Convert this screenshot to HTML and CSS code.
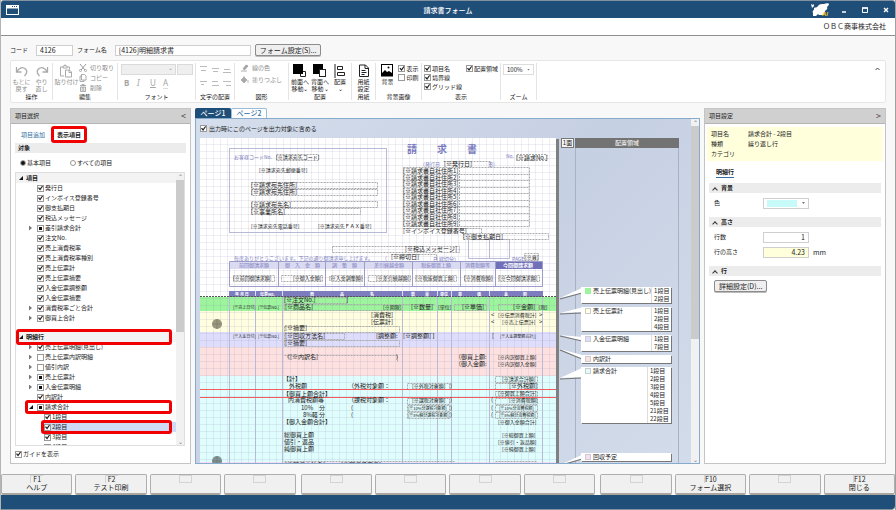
FILE: index.html
```html
<!DOCTYPE html>
<html lang="ja">
<head>
<meta charset="utf-8">
<title>請求書フォーム</title>
<link rel="stylesheet" href="styles.css">
</head>
<body>
<div class="app">
  <header class="titlebar">
    <svg class="app-icon" width="13" height="10" viewBox="0 0 13 10"><rect x="0.5" y="0.5" width="12" height="9" fill="#1f4e79" stroke="#fff"/><path d="M0 2H13" stroke="#fff" stroke-width="3"/><path d="M6 1.5h1M8 1.5h1M10 1.5h1" stroke="#1f4e79"/></svg>
    <h1>請求書フォーム</h1>
    <div class="window-tools">
      <svg width="20" height="14" viewBox="0 0 20 14"><path d="M0 1l2 1 1-1v2l-1 1-1 1z M3 5c1-1 3 0 4-2 1-2 4-2 6-2 2-1 5-1 5 0 0 1-1 2-2 3 1 2-1 3-2 4l-1 4H8l-1-1-2 2H2V10C1 9 2 7 3 7z" fill="#fff"/><text x="11" y="13" class="ai">AI</text></svg>
      <button type="button" aria-label="最小化"><svg width="6" height="8" viewBox="0 0 6 8"><path d="M1 6h4" stroke="#fff" stroke-width="1.5"/></svg></button>
      <button type="button" aria-label="最大化"><svg width="6" height="8" viewBox="0 0 6 8"><path d="M.5 2v4.500h5V2z" fill="none" stroke="#fff"/><path d="M0 2h6" stroke="#fff" stroke-width="1.500"/></svg></button>
      <button type="button" aria-label="閉じる"><svg width="6" height="8" viewBox="0 0 6 8"><path d="M1 2l4 4M5 2l-4 4" stroke="#fff" stroke-width="1.400"/></svg></button>
    </div>
  </header>
  <div class="company">ＯＢＣ商事株式会社</div>

  <form class="form-row">
    <label for="code">コード</label><input id="code" class="box code" value="4126">
    <label for="fname">フォーム名</label><input id="fname" class="box fname" value="[4126]明細請求書">
    <button type="button" class="btn">フォーム設定(S)...</button>
  </form>

  <div class="ribbon">
    <section class="group g-op">
      <div class="tools">
        <button type="button" class="tool off"><svg width="14" height="12" viewBox="0 0 14 12"><path d="M1.500 2v5h5M2 6.500C4 2.500 8 1.500 10.500 4c2 2 1.500 4.500-1 7" fill="none" stroke="#aaa" stroke-width="1.300"/></svg>もとに<br>戻す</button>
        <button type="button" class="tool off"><svg width="14" height="12" viewBox="0 0 14 12"><path d="M12.500 2v5h-5M12 6.500C10 2.500 6 1.500 3.500 4c-2 2-1.500 4.500 1 7" fill="none" stroke="#aaa" stroke-width="1.300"/></svg>やり<br>直し</button>
      </div><h2>操作</h2>
    </section>
    <section class="group g-edit">
      <div class="tools">
        <button type="button" class="tool off"><svg width="12" height="13" viewBox="0 0 12 13"><path d="M4 11.500H.5v-9H3M7 2.500h2.500V5M3 3.500v-2h1.500V.5h1v1H7v2z M5.500 5.500h4l2 2v5h-6z M9 5.500V8h2.500" fill="none" stroke="#aaa"/></svg>貼り付け</button>
        <div class="stack off">
          <button type="button"><svg width="8" height="8" viewBox="0 0 8 8"><path d="M1 0l5 6M7 0L2 6" stroke="#999"/><circle cx="1.500" cy="6.500" r="1" fill="none" stroke="#999" stroke-width=".8"/><circle cx="6.500" cy="6.500" r="1" fill="none" stroke="#999" stroke-width=".8"/></svg>切り取り</button>
          <button type="button"><svg width="8" height="8" viewBox="0 0 8 8"><path d="M2.500 .5h3l1.500 1.500v4h-4.500zM2.500 2H1v5.500h4V6" fill="none" stroke="#999" stroke-width=".8"/></svg>コピー</button>
          <button type="button"><svg width="8" height="8" viewBox="0 0 8 8"><path d="M1 1.500h6M3 1.500v-1h2v1M1.500 3h5v4.500h-5zM3.200 3v4M4.800 3v4" fill="none" stroke="#999" stroke-width=".8"/></svg>削除</button>
        </div>
      </div><h2>編集</h2>
    </section>
    <section class="group g-font">
      <div class="tools wrap">
        <span class="gray-select wide">⌄</span><span class="gray-select"></span>
        <div class="letters"><b>B</b><i>I</i><u>U</u><span class="color-a">A</span></div>
      </div><h2>フォント</h2>
    </section>
    <section class="group g-align">
      <div class="tools"><svg width="32" height="24" viewBox="0 0 32 24"><g stroke="#bbb" stroke-width="1" fill="none"><path d="M1 2.500h7M2 6.500h5M13 4.500h7M14 7.500h5M25 5.500h6M24 8.500h8M1 17.500h7M2 20.500h3M13 17.500h6M13 21.500h7M24 17.500h8M27 21.500h5"/></g></svg></div>
      <h2>文字の配置</h2>
    </section>
    <section class="group g-shape">
      <div class="tools stack off two">
        <button type="button"><svg width="8" height="8" viewBox="0 0 8 8"><path d="M0 7h6M2 5l3-4 2 1-3 3.500z" stroke="#999" fill="#aaa" stroke-width=".8"/></svg>線の色</button>
        <button type="button"><svg width="8" height="8" viewBox="0 0 8 8"><path d="M0 4l3-3 3 3-3 3zM3 0v3M7 4v3" stroke="#aaa" fill="#aaa" stroke-width=".8"/></svg>塗りつぶし</button>
      </div><h2>図形</h2>
    </section>
    <section class="group g-arr">
      <div class="tools">
        <button type="button" class="tool"><svg width="14" height="14" viewBox="0 0 14 14"><path d="M9 7.500h3.500v5H7.500V10" fill="none" stroke="#222"/><rect x="0" y="0" width="10" height="10" fill="#000"/></svg>前面へ<br>移動⌄</button>
        <button type="button" class="tool"><svg width="14" height="14" viewBox="0 0 14 14"><rect x="0" y="0" width="10" height="10" fill="#000"/><rect x="6.500" y="5.500" width="6" height="7" fill="#fff" stroke="#222"/></svg>背面へ<br>移動⌄</button>
        <button type="button" class="tool"><svg width="12" height="14" viewBox="0 0 12 14"><path d="M1 0v14M3.500 2.500h5v3h-5zM3.500 8.500h7v3h-7z" fill="none" stroke="#222"/></svg>配置<br>⌄</button>
      </div><h2>配置</h2>
    </section>
    <section class="group g-paper">
      <div class="tools"><button type="button" class="tool"><svg width="10" height="14" viewBox="0 0 10 14"><path d="M.5 1h6l3 3v8.500h-9zM6 1v3.500h3.500M2.500 6.500h4M2.500 8.500h5M2.500 10.500h3" fill="none" stroke="#222"/></svg>用紙<br>設定</button></div><h2>用紙</h2>
    </section>
    <section class="group g-bg">
      <div class="tools">
        <button type="button" class="tool"><svg width="12" height="14" viewBox="0 0 12 14"><rect x=".5" y=".5" width="11" height="11.500" fill="#fff" stroke="#000"/><path d="M1 9l3-3 2 2 2-1 3 2v3H1z" fill="#000"/><circle cx="7.500" cy="3.500" r="1" fill="#000"/></svg>背景</button>
        <div class="checks"><label><input type="checkbox" checked>表示</label><label><input type="checkbox">印刷</label></div>
      </div><h2>背景画像</h2>
    </section>
    <section class="group g-view">
      <div class="tools">
        <div class="checks"><label><input type="checkbox" checked>項目名</label><label><input type="checkbox" checked>境界線</label><label><input type="checkbox" checked>グリッド線</label></div>
        <div class="checks"><label><input type="checkbox" checked>配置領域</label></div>
      </div><h2>表示</h2>
    </section>
    <section class="group g-zoom">
      <div class="tools zoom"><select aria-label="ズーム"><option>100%</option></select><i class="drop"></i></div><h2>ズーム</h2>
    </section>
    <button type="button" class="collapse" aria-label="折りたたむ"><svg width="5" height="4" viewBox="0 0 5 4"><path d="M.5 3l2-2 2 2" fill="none" stroke="#444"/></svg></button>
  </div>

  <main class="workspace">
    <aside class="panel left">
      <div class="panel-head"><span>項目選択</span><span class="chev">&lt;</span></div>
      <div class="tabs"><a href="#add">項目追加</a><a href="#shown" class="current marked">表示項目</a></div>
      <h3 class="strip">対象</h3>
      <div class="radios"><label><input type="radio" name="t" checked>基本項目</label><label><input type="radio" name="t">すべての項目</label></div>
      <div class="tree">
        <div class="tree-body">
          <div class="tree-head"><span class="open"></span>項目</div>
          <ul>
            <li><label><input type="checkbox" checked>発行日</label></li>
            <li><label><input type="checkbox" checked>インボイス登録番号</label></li>
            <li><label><input type="checkbox" checked>御支払期日</label></li>
            <li><label><input type="checkbox" checked>税込メッセージ</label></li>
            <li class="node"><label><input type="checkbox" class="part">差引請求合計</label></li>
            <li><label><input type="checkbox" checked>注文No.</label></li>
            <li><label><input type="checkbox" checked>売上消費税率</label></li>
            <li><label><input type="checkbox" checked>売上消費税率種別</label></li>
            <li><label><input type="checkbox" checked>売上伝票計</label></li>
            <li><label><input type="checkbox" checked>売上伝票摘要</label></li>
            <li><label><input type="checkbox" checked>入金伝票調整額</label></li>
            <li><label><input type="checkbox" checked>入金伝票摘要</label></li>
            <li class="node"><label><input type="checkbox" checked>消費税率ごと合計</label></li>
            <li class="node"><label><input type="checkbox" checked>御買上合計</label></li>
          </ul>
          <div class="tree-head marked"><span class="open"></span>明細行</div>
          <ul>
            <li class="node"><label><input type="checkbox" checked>売上伝票明細(見出し)</label></li>
            <li class="node"><label><input type="checkbox">売上伝票内訳明細</label></li>
            <li class="node"><label><input type="checkbox">値引内訳</label></li>
            <li class="node"><label><input type="checkbox" class="part">売上伝票計</label></li>
            <li class="node"><label><input type="checkbox" class="part">入金伝票明細</label></li>
            <li><label><input type="checkbox" checked>内訳計</label></li>
            <li class="marked"><span class="open"></span><label><input type="checkbox" class="part">請求合計</label></li>
            <li class="child"><label><input type="checkbox" checked>1段目</label></li>
            <li class="child selected marked"><label><input type="checkbox" checked>2段目</label></li>
            <li class="child"><label><input type="checkbox" checked>3段目</label></li>
            <li class="child"><label><input type="checkbox" checked>4段目</label></li>
          </ul>
        </div>
        <div class="scroll"><span>⌃</span><i class="thumb"></i><span>⌄</span></div>
      </div>
      <label class="guide"><input type="checkbox" checked>ガイドを表示</label>
    </aside>

    <section class="designer">
      <nav class="page-tabs"><button type="button" class="active">ページ1</button><button type="button">ページ2</button></nav>
      <div class="canvas">
        <div class="canvas-main">
          <label class="include"><input type="checkbox" checked>出力時にこのページを出力対象に含める</label>
          <div class="stage">
            <svg class="paper" width="359" height="326" viewBox="200 138 359 326">
              <defs><pattern id="grid" x="200" y="138" width="7" height="7" patternUnits="userSpaceOnUse"><path d="M6.500 0V7M0 6.500H7" stroke="#88a" stroke-opacity=".14" fill="none"/></pattern></defs>
              <rect x="556" y="139" width="3" height="325" fill="#808080"/>
              <rect x="200" y="138" width="356" height="326" fill="#fff"/>
              <rect x="200" y="297" width="356" height="14" fill="#9cf59c"/>
              <rect x="200" y="311" width="356" height="21" fill="#fffee0"/>
              <rect x="200" y="332" width="356" height="15" fill="#dedefc"/>
              <rect x="200" y="347" width="356" height="29" fill="#fde1e1"/>
              <rect x="200" y="376" width="356" height="86" fill="#dffdfd"/>
              <rect x="200" y="462" width="356" height="2" fill="#fbdcf6"/>
              <rect x="200" y="138" width="356" height="326" fill="url(#grid)"/>
              <circle cx="217" cy="324" r="5" fill="#98987c"/><circle cx="217" cy="461" r="5" fill="#7d9393"/>
              <path d="M212 324h10M217 319v10M212 461h10M217 456v8" stroke="#777" stroke-width=".6"/>
              <g fill="none" stroke="#b9b9d8">
                <rect x="229.500" y="148.500" width="157" height="84"/>
                <path d="M468.500 239.500h41v19h-41zM489.500 239.500v19"/>
                <path d="M229.500 297V464M255.500 297V464M282.500 297V464M402.500 297V464M437.500 297V464M451.500 297V464M489.500 297V464M542.500 297V464"/>
              </g>
              <rect x="230" y="261" width="265" height="8" fill="#dadaf0"/><rect x="495" y="261" width="47" height="8" fill="#7070b8"/>
              <path d="M229.500 261.500H542.500V286.500H229.500zM278.500 261V287M325.500 261V287M364.500 261V287M412.500 261V287M460.500 261V287M495.500 261V287" fill="none" stroke="#9d9dcb"/>
              <rect x="229" y="291" width="314" height="6" fill="#7c7cbe"/>
              <path d="M255.500 291v6M282.500 291v6M402.500 291v6M437.500 291v6M451.500 291v6M489.500 291v6" stroke="#ddf"/>
              <path d="M200 296.500H556" stroke="#555" stroke-dasharray="2 1"/>
              <g class="dash">
                <path d="M276.500 154.500h42v6h-42zM251.500 182.500h126v6h-126zM251.500 189.500h126v6h-126zM251.500 201.500h126v6h-126zM251.500 208.500h109v6h-109z"/>
                <path d="M403.500 167.500h126v59h-126zM403.500 174.500h126M403.500 180.500h126M403.500 187.500h126M403.500 193.500h126M403.500 200.500h126M403.500 206.500h126M403.500 213.500h126M403.500 220.500h126M459.500 167v59"/>
                <path d="M443.500 161.500h47v6M517 154.500h30v6h-30zM403.500 228.500h78v6M463.500 233.500h85v6h-85zM332.500 246.500h127v6h-127zM391.500 254.500h45v6M524.500 253.500h14v7h-14z"/>
                <path d="M233.500 275.500h41v6h-41zM281.500 275.500h41v6h-41zM331.500 275.500h31v6h-31zM368.500 275.500h42v6h-42zM415.500 275.500h41v6h-41zM464.500 275.500h28v6h-28zM498.500 275.500h41v6h-41z"/>
                <path d="M284.500 297.500h63v6h-63zM284.500 304.500h118v6h-118zM402.500 304.500h33M454.500 310.500v-6h32v6zM498.500 304.500h40v6h-40zM284.500 326.500h115v6h-115zM284.500 333.500h60v6h-60zM284.500 340.500h115v6h-115zM403.500 333.500h30v6M284.500 355.500h113v6M495.500 376.500h42v6h-42zM495.500 383.500h42v6h-42zM495.500 391.500h42v5h-42zM495.500 398.500h42v6h-42zM495.500 405.500h42v6h-42zM495.500 412.500h42v6h-42z"/>
                <path d="M407.500 383.500h42v6h-42zM407.500 398.500h42v6h-42zM407.500 405.500h42v6h-42zM407.500 412.500h42v6h-42zM284.500 461.500h170M495.500 461.500h42"/>
              </g>
              <path d="M200 389.500H556M200 397.500H556" stroke="#f45b5b"/>
              <g class="ink">
                <text x="407" y="153" class="big">請　　求　　書</text>
                <text x="234" y="159">お客様コードNo.</text><text x="506" y="158">No.</text>
                <text x="420" y="166">（発行日</text><text x="488" y="166">日）</text>
                <text x="433" y="261">日 締切分）</text><text x="382" y="260">（</text><text x="512" y="261">PAGE</text>
                <text x="234" y="260">毎度ありがとうございます。下記の通り御請求申し上げます。</text>
                <text x="239" y="267">前回御請求額</text><text x="285" y="267">御　入　金　額</text><text x="332" y="267">調　整　額</text><text x="374" y="267">差引繰越金額</text><text x="421" y="267">税抜御買上額</text><text x="465" y="267">消費税額等</text>
              </g>
              <g class="rev">
                <text x="503" y="267" class="five">今回御請求額</text>
                <text x="235" y="296">年 月 日</text><text x="260" y="296">伝票No.</text><text x="310" y="296">商</text><text x="340" y="296">品</text><text x="370" y="296">名</text>
                <text x="411" y="296">数</text><text x="425" y="296">量</text><text x="440" y="296">単位</text><text x="458" y="296">単</text><text x="477" y="296">価</text><text x="504" y="296">金</text><text x="523" y="296">額</text>
              </g>
              <g class="item">
                <text x="251" y="187">[※請求宛先住所]</text><text x="251" y="194">[※請求宛先住所]</text><text x="251" y="207">[※請求宛先名]</text><text x="251" y="214">[※事業所名]</text>
                <text x="516" y="160">[※請求No.]</text><text x="444" y="166">[※発行日]</text>
                <text x="403" y="173">[※請求書自社住所1]</text><text x="403" y="180">[※請求書自社住所2]</text><text x="403" y="186">[※請求書自社住所3]</text><text x="403" y="193">[※請求書自社住所4]</text><text x="403" y="199">[※請求書自社住所5]</text><text x="403" y="206">[※請求書自社住所6]</text><text x="403" y="212">[※請求書自社住所7]</text><text x="403" y="219">[※請求書自社住所8]</text><text x="403" y="226">[※請求書自社住所9]</text>
                <text x="403" y="233">[※インボイス登録番号]</text><text x="463" y="239">[※御支払期日]</text><text x="405" y="251">[※税込メッセージ]</text><text x="391" y="259">[※締切日]</text>
                <text x="284" y="302">[※注文No.]</text><text x="346" y="302">]</text><text x="285" y="309">[※商品名]</text><text x="411" y="309">[※数量]</text><text x="462" y="309">[※単価]</text><text x="513" y="309">[※金額]</text>
                <text x="371" y="317">[消費税]</text><text x="371" y="324">[伝票計]</text>
                <text x="285" y="330">[※摘要]</text><text x="285" y="338">[※回収方法名]</text><text x="376" y="338">[調整額:</text><text x="403" y="338">[※調整額] ]</text><text x="285" y="345">[※摘要]</text>
                <text x="284" y="359">《[※内訳名]</text><text x="396" y="359">)</text><text x="455" y="359">（御買上額:</text><text x="455" y="366">（御入金額:</text>
                <text x="283" y="381">【計】</text><text x="289" y="388">外税額</text><text x="348" y="388">（外税対象額：</text><text x="509" y="388">[※外税額]</text>
                <text x="283" y="396">【御買上額合計】</text><text x="288" y="402">内消費税額等</text><text x="348" y="402">（課税対象額：</text>
                <text x="301" y="410">10%</text><text x="319" y="410">分</text><text x="351" y="410">(</text><text x="303" y="417">8%軽</text><text x="319" y="417">分</text><text x="351" y="417">(</text>
                <text x="283" y="424">【御入金額合計】</text><text x="284" y="437">総御買上額</text><text x="284" y="444">値引・返品</text><text x="284" y="451">純御買上額</text>
                <text x="491" y="317">&lt;</text><text x="539" y="317">&gt;</text><text x="491" y="324">&lt;</text><text x="539" y="324">&gt;</text><text x="491" y="402">(</text><text x="491" y="410">(</text><text x="491" y="417">(</text><text x="492" y="338">[</text>
                <text x="450" y="388">)</text><text x="450" y="402">)</text><text x="450" y="410">)</text><text x="450" y="417">)</text>
                <text x="285" y="467">[※回収方法名]</text><text x="341" y="467">[※回収予定日]</text>
              </g>
              <g class="item five">
                <text x="276" y="159">[※請求宛先コード]</text><text x="259" y="172">[※請求宛先郵便番号]</text><text x="251" y="228">[※請求宛先電話番号]</text><text x="318" y="228">[※請求宛先ＦＡＸ番号]</text>
                <text x="525" y="259">[※頁]</text>
                <text x="233" y="280">[※前回御請求額]</text><text x="293" y="280">[※御入金額]</text><text x="329" y="280">[※入金調整額]</text><text x="376" y="280">[※差引繰越額]</text><text x="416" y="280">[※税抜御買上額]</text><text x="464" y="280">[※消費税額]</text><text x="499" y="280">[※今回御請求額]</text>
                <text x="383" y="309">[※期限]</text><text x="438" y="309">[単位]</text><text x="539" y="309">[税]</text>
                <text x="498" y="317">[※伝票消費税計]</text><text x="502" y="324">[※売上伝票計]</text>
                <text x="498" y="359">[※内訳御買上額]</text><text x="498" y="366">[※内訳御入金額]</text><text x="502" y="381">[※請求合計額]</text><text x="498" y="395">[※御買上額合計]</text><text x="509" y="402">[※消費税額]</text><text x="498" y="424">[※御入金額合計]</text><text x="502" y="437">[※総御買上額]</text><text x="498" y="444">[※値引・返品額]</text><text x="502" y="451">[※純御買上額]</text>
                <text x="412" y="388">[※外税対象額]</text><text x="412" y="402">[※課税対象額]</text>
                <text x="498" y="467">[※回収予定額]</text><text x="234" y="467">[※回収日]</text>
              </g>
              <g class="item four">
                <text x="233" y="309">[※売上日付]</text><text x="258" y="309">[※伝票No.]</text><text x="233" y="338">[※入金日付]</text><text x="258" y="338">[※伝票No.]</text><text x="500" y="338">[※入金調整額合計]]</text>
                <text x="408" y="410">[※10%分課税対象額]</text><text x="408" y="417">[※8%軽分課税対象額]</text><text x="499" y="410">[※10%分消費税額]</text><text x="499" y="417">[※8%軽分消費税額]</text>
              </g>
            </svg>
            <div class="side-no">1面</div>
            <div class="lane">
              <svg class="tails" width="36" height="326" viewBox="559 138 36 326">
                <g fill="#fff"><path d="M560 298L584 287H595V293H582z"/><path d="M560 313L584 307H590V312H582z"/><path d="M560 335L582 337V341z"/><path d="M560 349L582 355V359z"/><path d="M560 378L584 367H590V377H582z"/><path d="M562 464L584 454H590V459H582z"/></g>
                <path d="M560 299L582 293M560 314L582 313M560 336L582 341M560 350L582 359M560 379L582 378M562 465L582 459" stroke="#777" stroke-width="1.200"/>
              </svg>
              <div class="lane-head">配置領域</div>
              <div class="cards">
                <div class="card"><i class="swatch green"></i><span>売上伝票明細(見出し)</span><ol><li>1段目</li><li>2段目</li></ol></div>
                <div class="card"><i class="swatch yellow"></i><span>売上伝票計</span><ol><li>1段目</li><li>2段目</li><li>4段目</li></ol></div>
                <div class="card"><i class="swatch violet"></i><span>入金伝票明細</span><ol><li>1段目</li><li>7段目</li></ol></div>
                <div class="card"><i class="swatch pink"></i><span>内訳計</span></div>
                <div class="card"><i class="swatch cyan"></i><span>請求合計</span><ol class="wide"><li>1段目</li><li>2段目</li><li>3段目</li><li>4段目</li><li>5段目</li><li>21段目</li><li>22段目</li></ol></div>
                <div class="card last"><i class="swatch rose"></i><span>回収予定</span></div>
              </div>
            </div>
          </div>
        </div>
        <div class="scroll big"><span>⌃</span><i class="thumb"></i><span>⌄</span></div>
      </div>
    </section>

    <aside class="panel right">
      <div class="panel-head"><span>項目設定</span><span class="chev">&gt;</span></div>
      <dl class="info"><dt>項目名</dt><dd>請求合計 - 2段目</dd><dt>種類</dt><dd>繰り返し行</dd><dt>カテゴリ</dt><dd></dd></dl>
      <div class="tabs"><a href="#row" class="current">明細行</a></div>
      <h3 class="strip"><span class="up"></span>背景</h3>
      <div class="field"><label for="color">色</label><button type="button" id="color" class="box color-pick"><i class="chip"></i><i class="drop"></i></button></div>
      <h3 class="strip"><span class="up"></span>高さ</h3>
      <div class="field"><label for="rows">行数</label><input id="rows" class="box num" value="1"></div>
      <div class="field"><label for="rh">行の高さ</label><input id="rh" class="box num hot" value="4.23"><span class="unit">mm</span></div>
      <h3 class="strip"><span class="up"></span>行</h3>
      <button type="button" class="btn detail">詳細設定(D)...</button>
    </aside>
  </main>

  <footer class="keys">
    <div class="key-group"><button type="button"><kbd>F1</kbd>ヘルプ</button><button type="button"><kbd>F2</kbd>テスト印刷</button><button type="button" aria-label="F3"><kbd></kbd></button><button type="button" aria-label="F4"><kbd></kbd></button></div>
    <div class="key-group"><button type="button" aria-label="F5"><kbd></kbd></button><button type="button" aria-label="F6"><kbd></kbd></button><button type="button" aria-label="F7"><kbd></kbd></button><button type="button" aria-label="F8"><kbd></kbd></button></div>
    <div class="key-group"><button type="button" aria-label="F9"><kbd></kbd></button><button type="button"><kbd>F10</kbd>フォーム選択</button><button type="button" aria-label="F11"><kbd></kbd></button><button type="button"><kbd>F12</kbd>閉じる</button></div>
  </footer>
  <div class="statusbar"></div>
</div>
</body>
</html>
```
FILE: styles.css
```css
* { box-sizing: border-box; margin: 0; padding: 0; }
body { font: 6px/10px "Noto Sans CJK JP", "Noto Sans", sans-serif; color: #1c1c1c; background: #f8f8f8; }
button, input, select { font: inherit; color: inherit; border: 0; background: none; }
ul, ol { list-style: none; }
a { text-decoration: none; color: #2f6fa3; }
svg { display: block; flex: none; }
label { display: flex; align-items: center; }

.app { height: 100vh; display: flex; flex-direction: column; border-left: 1px solid #b4b4b4; border-right: 1px solid #a0a0a0; }

.titlebar { display: grid; grid-template-columns: 1fr auto 1fr; align-items: center; height: 18px; padding: 0 5px; background: #1f4e79; border-top: 1px solid #8392a0; border-radius: 3px 3px 0 0; color: #fff; }
.titlebar h1 { font-size: 7px; font-weight: 500; }
.window-tools { display: flex; justify-content: flex-end; align-items: center; gap: 9px; }
.window-tools svg:first-child { margin-right: -4px; }
.window-tools button { width: 12px; display: flex; justify-content: center; }
.window-tools button svg { margin: 0; }
.ai { font: italic bold 6px "Liberation Sans", sans-serif; fill: #f5c518; }

.company { height: 18px; padding: 4px 9px 0; text-align: right; font-size: 7px; line-height: 9px; background: #fff; border-bottom: 1px solid #8f8f8f; }

.form-row { display: flex; align-items: center; padding: 8px 9px 4px; }
.box { height: 11px; border: 1px solid #cfcfcf; background: #fff; padding: 0 3px; }
.code { width: 37px; margin: 0 4px 0 8px; }
.fname { width: 136px; margin: 0 4px 0 8px; }
.form-row .box { font-size: 7px; }
.btn { height: 12px; padding: 0 4px; font-size: 7px; line-height: 8px; background: #efefef; border: 1px solid #8c8c8c; border-radius: 2px; box-shadow: 0 1px 0 #bbb; }

.ribbon { display: flex; height: 43px; margin: 0 9px 5px; background: #fff; border: 1px solid #e6e6e6; border-radius: 2px; padding: 2px 0; }
.group { flex: none; display: flex; flex-direction: column; border-right: 1px solid #e4e4e4; padding: 1px 3px 0; }
.group h2 { margin-top: auto; font-size: 6px; line-height: 7px; font-weight: 400; text-align: center; }
.tools { display: flex; justify-content: center; gap: 2px; }
.tool { display: flex; flex-direction: column; align-items: center; justify-content: flex-start; line-height: 7px; min-width: 18px; white-space: nowrap; }
.tool svg { height: 14px; }
.off { color: #8d8d8d; }
.stack { display: flex; flex-direction: column; gap: 2px; }
.stack button { display: flex; align-items: center; gap: 3px; line-height: 8px; white-space: nowrap; }
.stack.two { gap: 4px; align-items: flex-start; padding-left: 3px; }
.g-op { width: 42px; padding: 1px 1px 0; }
.g-edit { width: 65px; }
.g-font { width: 78px; padding: 1px 2px 0; }
.g-align { width: 39px; }
.g-shape { width: 54px; }
.g-arr { width: 63px; padding: 1px 1px 0; }
.g-paper { width: 24px; }
.g-bg { width: 46px; padding: 1px 2px 0; }
.g-view { width: 79px; }
.g-zoom { width: 36px; padding: 1px 2px 0; }
.wrap { flex-wrap: wrap; gap: 1px; }
.gray-select { width: 16px; height: 11px; background: #efefef; border: 1px solid #dadada; text-align: right; line-height: 6px; padding-right: 2px; color: #999; }
.gray-select.wide { width: 55px; }
.letters { width: 100%; display: flex; gap: 8px; padding: 2px 4px; color: #a5a5a5; font: 8px/10px "Noto Sans", sans-serif; }
.letters > * { width: 5px; }
.color-a { border-bottom: 1px solid #ddd; }
.checks { display: flex; flex-direction: column; }
.checks label { height: 9px; white-space: nowrap; }
.g-view .checks + .checks { margin-left: 2px; }
.zoom { height: 11px; border: 1px solid #ddd; padding: 0 3px; align-items: center; justify-content: space-between; }
.zoom select { appearance: none; width: 17px; line-height: 9px; }
.drop { flex: none; width: 3px; height: 2px; background: #777; clip-path: polygon(0 0, 100% 0, 50% 100%); }
.collapse { margin: 4px 5px auto auto; }

input[type="checkbox"] { appearance: none; flex: none; width: 7px; height: 7px; margin-right: 1px; border: 1px solid #9a9a9a; background: #fff; }
input[type="checkbox"]:checked::before { content: ""; display: block; width: 5px; height: 5px; background: #222; clip-path: polygon(0 50%, 20% 35%, 40% 60%, 85% 0, 100% 15%, 42% 100%); }
input.part::before { content: ""; display: block; width: 3px; height: 3px; margin: 1px; background: #111; }
input[type="radio"] { appearance: none; width: 6px; height: 6px; margin-right: 1px; border: 1px solid #999; border-radius: 50%; background: #fff; }
input[type="radio"]:checked::before { content: ""; display: block; width: 4px; height: 4px; background: #111; border-radius: 50%; }

.workspace { flex: 1; min-height: 0; display: flex; gap: 4px; padding: 0 9px; }
.panel { display: flex; flex-direction: column; background: #fff; border: 1px solid #c4c4c4; }
.panel-head { flex: none; display: flex; justify-content: space-between; height: 15px; padding: 0 4px; line-height: 14px; background: #d0d0d0; border-bottom: 1px solid #b4b4b4; }
.chev { font-size: 9px; color: #444; }
.left { width: 181px; }
.right { width: 182px; }
.tabs { display: flex; gap: 12px; padding: 4px 9px 0; }
.tabs a { height: 11px; line-height: 10px; }
.tabs .current { color: #1c1c1c; font-weight: 700; border-bottom: 1px solid #2f6fa3; }
.marked { position: relative; }
.marked::after { content: ""; position: absolute; inset: -3px 4px -3px 0; border: 3px solid #f00000; border-radius: 3px; }
.tabs .marked::after { inset: -4px -6px -3px; }
.strip { flex: none; height: 10px; padding-left: 3px; font-size: 6px; font-weight: 700; background: #ececec; display: flex; align-items: center; }

.left .tabs { padding: 6px 9px 0 10px; }
.left .strip { margin: 2px 4px 0; }
.radios { flex: none; display: flex; gap: 19px; padding: 0 9px; height: 19px; }
.tree { flex: 1; min-height: 0; margin: 0 5px 0 4px; display: flex; border: 1px solid #dedede; }
.tree-body { flex: 1; overflow: hidden; }
.tree-head { height: 10px; display: flex; align-items: center; font-weight: 700; background: #f3f3f3; }
.open { width: 4px; height: 4px; margin: 0 3px; background: #111; clip-path: polygon(100% 0, 100% 100%, 0 100%); }
.tree ul:first-of-type { margin-bottom: 9px; }
.tree li { height: 10px; display: flex; align-items: center; padding-left: 21px; }
.tree li.node::before { content: ""; width: 3px; height: 5px; margin: 0 5px 0 -8px; background: #777; clip-path: polygon(0 0, 100% 50%, 0 100%); }
.tree li.marked { padding-left: 10px; }
.tree li.marked .open { margin: 0 4px 0 3px; }
.tree li.marked::after { inset: -2px 4px -2px 9px; }
.tree li.child { padding-left: 28px; }
.tree li.selected { background: linear-gradient(#cfdaf5, #cfdaf5) 26px 0 no-repeat; }
.tree li.selected::after { left: 25px; }
.scroll { width: 8px; flex: none; display: flex; flex-direction: column; background: #f1f1f1; color: #777; text-align: center; line-height: 7px; }
.scroll .thumb { height: 56%; margin-bottom: auto; background: #cbcbcb; }
.scroll.big .thumb { height: 62%; }
.guide { flex: none; height: 17px; padding: 0 4px 1px; }

.designer { flex: 1; min-width: 0; display: flex; flex-direction: column; }
.page-tabs { display: flex; height: 10px; }
.page-tabs button { width: 36px; font-size: 7px; line-height: 9px; font-weight: 500; color: #2f6fa3; background: #fff; border: 1px solid #9bbcd8; border-bottom: 0; border-radius: 2px 2px 0 0; }
.page-tabs .active { color: #fff; background: #1f4e79; border-color: #1f4e79; }
.canvas { flex: 1; min-height: 0; display: flex; border: 1px solid #86abcd; background: linear-gradient(135deg, #d5deec, #c6d0e3 50%, #d2dcea); }
.canvas-main { flex: 1; min-width: 0; padding-left: 4px; display: flex; flex-direction: column; overflow: hidden; }
.include { flex: none; height: 19px; }
.include input { margin-right: 2px; }
.stage { flex: 1; min-height: 0; display: flex; overflow: hidden; }
.side-no { width: 13px; height: 10px; margin: 0 1px 0 2px; line-height: 8px; text-align: center; background: #f4f4f4; border: 1px solid #777; }
.lane { position: relative; width: 104px; display: flex; flex-direction: column; border: 1px solid #a7b2c6; border-width: 0 1px; }
.lane-head { height: 10px; background: #737373; color: #fff; text-align: center; margin: 0 -1px; }
.cards { position: relative; flex: 1; display: flex; flex-direction: column; gap: 4px; padding: 139px 7px 2px 5px; }
.card { display: flex; align-items: flex-start; background: #fff; line-height: 8px; box-shadow: 1px 1px 0 #777; padding-left: 4px; white-space: nowrap; }
.card.last { margin-top: auto; }
.card ol { width: 20px; margin-left: auto; padding-left: 2px; border-left: 1px solid #ddd; }
.card ol.wide { width: 24px; }
.swatch { width: 6px; height: 6px; margin: 1px 2px 0 0; border: 1px solid #ccc; }
.green { background: #9cf59c; border-color: #9cf59c; }
.yellow { background: #fffee0; }
.violet { background: #dedefc; }
.pink { background: #fde1e1; }
.cyan { background: #dffdfd; }
.rose { background: #fbdcf6; }
.tails { position: absolute; left: -17px; top: 0; }

.paper text { font-size: 6px; fill: #222; }
.paper .ink text { font-size: 5px; fill: #7c7cc0; }
.paper .ink .big { font-size: 10px; font-weight: 700; }
.paper .rev text { font-size: 4px; font-weight: 700; fill: #fff; }
.paper .five text, .paper .rev .five { font-size: 5px; }
.paper .four text { font-size: 4px; }
.dash { fill: none; stroke: #aaa; stroke-width: 1; stroke-dasharray: 2 1; }

.info { display: grid; grid-template-columns: 37px 1fr; grid-auto-rows: 10px; margin: 3px 2px 0; padding: 2px 4px; background: #ffffdc; }
.right .tabs { padding: 6px 11px 5px; }
.right .strip { margin: 0 4px; }
.right .field + .strip { margin-top: 8px; }
.up { width: 4px; height: 4px; margin: 3px 4px 0 1px; border: solid #333; border-width: 1px 0 0 1px; transform: rotate(45deg); }
.field { display: flex; align-items: center; height: 12px; padding: 0 9px; margin-top: 4px; }
.field + .field { margin-top: 3px; }
.field label { width: 49px; }
.num, .color-pick { width: 46px; text-align: right; }
.num { font-size: 7px; }
.hot { background: #ffffdc; }
.color-pick { display: flex; justify-content: space-between; align-items: center; }
.chip { width: 30px; height: 7px; background: #c8fafa; }
.unit { margin-left: 4px; font-size: 7px; }
.detail { align-self: flex-start; margin: 4px 9px; }

.keys { flex: none; display: grid; grid-template-columns: repeat(3, 1fr); gap: 5px; margin-top: 10px; }
.key-group { display: grid; grid-template-columns: repeat(4, 1fr); gap: 3px; }
.key-group button { height: 21px; display: flex; flex-direction: column; align-items: center; font-size: 7px; line-height: 9px; background: #f0f0f0; border: 1px solid #aeaeae; border-bottom: 2px solid #aaa69e; border-radius: 2px; }
kbd { font: inherit; font-size: 7px; line-height: 7px; min-width: 13px; height: 8px; border: 1px solid #d4d4d4; text-align: center; }
kbd:not(:empty) { border-width: 1px 0 0 1px; }
.statusbar { flex: none; height: 15px; background: #1f4e79; border-bottom: 1px solid #8392a0; border-radius: 0 0 4px 0; }
```
